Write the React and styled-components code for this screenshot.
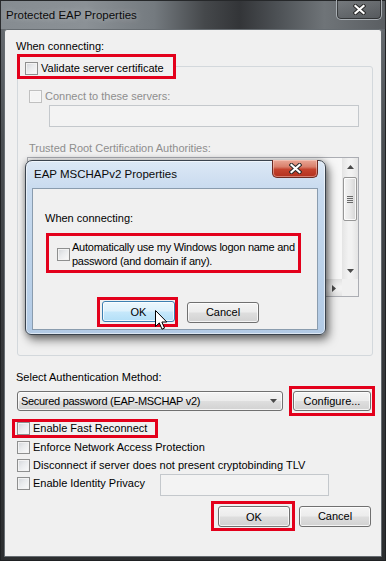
import React from "react";
import styled, { createGlobalStyle } from "styled-components";

const FONT = `"Liberation Sans", Arial, "DejaVu Sans", sans-serif`;
const RED = "#e3001b";

const GlobalStyle = createGlobalStyle`
  *, *::before, *::after { box-sizing: border-box; }
  html, body { margin: 0; padding: 0; }
  body { background: #2a2c2e; font-family: ${FONT}; overflow: hidden; }
`;

const Window = styled.div`
  position: relative;
  width: 386px;
  height: 561px;
  display: flex;
  flex-direction: column;
  background: linear-gradient(180deg, #6c7176 0%, #4b4f53 25%, #37393c 60%, #2c2e30 100%);
  box-shadow: inset 0 0 0 1px #1f2123;
`;

const TitleBar = styled.div`
  height: 29px;
  flex: none;
  display: flex;
  align-items: flex-start;
  padding-left: 6px;
  background: linear-gradient(90deg, #868c91 0%, #8b9196 22%, #747a7f 40%, #45484b 53%, #333538 62%, #4d5155 72%, #6f7478 84%, #5a5e62 100%);
  box-shadow: inset 0 1px 0 #26282a, inset 1px 0 0 #2a2c2e, inset -1px 0 0 #2a2c2e;
`;

const Title = styled.div`
  margin-top: ${(p) => p.$top}px;
  font-size: 11.5px;
  line-height: 14px;
  color: #0b0b0b;
  white-space: nowrap;
  text-shadow: ${(p) => (p.$glow ? "0 0 6px rgba(255,255,255,0.45)" : "none")};
`;

const CloseButton = styled.div`
  margin-left: auto;
  margin-right: ${(p) => (p.$red ? 0 : 4)}px;
  margin-top: ${(p) => (p.$red ? -1 : 0)}px;
  width: 46px;
  height: ${(p) => (p.$red ? 18 : 20)}px;
  flex: none;
  display: flex;
  align-items: center;
  justify-content: center;
  border-radius: 0 0 5px 5px;
  border: 1px solid ${(p) => (p.$red ? "#6b2a22" : "#a9afb4")};
  border-top: none;
  background: ${(p) =>
    p.$red
      ? "linear-gradient(180deg, #e9a796 0%, #d9806c 40%, #c5432e 55%, #b2311e 100%)"
      : "linear-gradient(180deg, rgba(255,255,255,0.08), rgba(0,0,0,0.08))"};
  box-shadow: ${(p) =>
    p.$red ? "inset 0 0 0 1px rgba(255,220,210,0.45)" : "inset 0 0 0 1px rgba(0,0,0,0.45)"};
`;

const CloseGlyph = () => (
  <svg width="13" height="11" viewBox="0 0 13 11">
    <g strokeLinecap="square">
      <path d="M2.5 2 L10.5 9 M10.5 2 L2.5 9" stroke="#2a2a2a" strokeWidth="4.2" />
      <path d="M2.5 2 L10.5 9 M10.5 2 L2.5 9" stroke="#ffffff" strokeWidth="2.2" />
    </g>
  </svg>
);

const Client = styled.div`
  position: relative;
  flex: 1;
  margin: 0 4px 4px 4px;
  display: flex;
  flex-direction: column;
  background: #f0f0f0;
  border: 1px solid #676d72;
  border-radius: 3px 3px 0 0;
`;

const Label = styled.div`
  font-size: 11px;
  line-height: 14px;
  color: ${(p) => (p.$disabled ? "#8e8e8e" : "#000")};
  white-space: nowrap;
`;

const Check = styled.label`
  display: flex;
  align-items: center;
  gap: ${(p) => p.$gap ?? 3}px;
  font-size: 11px;
  line-height: ${(p) => p.$lh ?? 14}px;
  letter-spacing: ${(p) => p.$ls ?? 0}px;
  color: ${(p) => (p.$disabled ? "#8e8e8e" : "#000")};
  white-space: nowrap;
`;

const Box = styled.input.attrs({ type: "checkbox", tabIndex: -1 })`
  appearance: none;
  -webkit-appearance: none;
  margin: 0;
  width: 13px;
  height: 13px;
  flex: none;
  border: 1px solid ${(p) => (p.disabled ? "#c0c0c0" : "#8e8f8f")};
  background: ${(p) =>
    p.disabled
      ? "#f4f4f4"
      : "linear-gradient(135deg, #d2d5d9 0%, #e9ebed 45%, #fbfbfb 100%)"};
  box-shadow: inset 0 0 0 1px ${(p) => (p.disabled ? "#f7f7f7" : "#f3f3f3")};
`;

const Highlight = styled.div`
  display: flex;
  align-items: center;
  width: ${(p) => (p.$w ? `${p.$w}px` : "fit-content")};
  border: 3px solid ${RED};
  padding: ${(p) => p.$pad};
`;

const Field = styled.input`
  width: ${(p) => p.$w}px;
  height: 22px;
  margin: 0;
  padding: 0;
  border: 1px solid #c4c8cc;
  background: #f3f3f3;
  outline: none;
`;

const Button = styled.button`
  width: ${(p) => p.$w}px;
  height: ${(p) => p.$h ?? 21}px;
  flex: none;
  margin: 0;
  padding: 0;
  font-family: ${FONT};
  font-size: 11px;
  color: #000;
  border: 1px solid ${(p) => (p.$hot ? "#3c7fb1" : "#707070")};
  border-radius: 3px;
  background: ${(p) =>
    p.$hot
      ? "linear-gradient(180deg, #ecf7fd 0%, #ddf1fc 48%, #c6e8fb 52%, #b3dff7 100%)"
      : "linear-gradient(180deg, #f4f4f4 0%, #ececec 48%, #dedede 52%, #d2d2d2 100%)"};
  box-shadow: inset 0 0 0 1px rgba(255, 255, 255, 0.75);
`;

/* ---- outer dialog sections ---- */

const ConnectingLabel = styled(Label)`
  margin: 9px 0 0 11px;
`;

const Group = styled.fieldset`
  margin: 1px 8px 0 12px;
  padding: 0;
  min-width: 0;
  border: 1px solid #d3d8dc;
  border-radius: 3px;
`;

const GroupLegend = styled.legend`
  margin-left: -1px;
  padding: 0;
`;

const GroupBody = styled.div`
  display: flex;
  flex-direction: column;
  align-items: flex-start;
  padding: 0 0 58px 9px;
`;

const ServersCheck = styled(Check)`
  margin: 10px 0 0 2px;
`;

const ServersField = styled(Field)`
  margin: 2px 0 0 22px;
`;

const TrustedLabel = styled(Label)`
  margin: 14px 0 0 2px;
`;

const ListBox = styled.div`
  margin-top: 2px;
  width: 332px;
  height: 140px;
  border: 1px solid #abadb3;
  background: #f7f7f7;
  display: grid;
  grid-template-columns: 1fr 16px;
  grid-template-rows: 1fr 17px;
`;

const VScroll = styled.div`
  display: flex;
  flex-direction: column;
  background: linear-gradient(90deg, #e4e4e4, #f2f2f2 40%, #f2f2f2 60%, #e4e4e4);
`;

const HScroll = styled.div`
  display: flex;
  justify-content: flex-end;
  border-top: 1px solid #e2e2e2;
  background: linear-gradient(180deg, #e4e4e4, #f2f2f2 40%, #f2f2f2 60%, #e4e4e4);
`;

const Corner = styled.div`
  background: #f0f0f0;
`;

const ScrollArrow = styled.div`
  flex: none;
  width: ${(p) => (p.$w ? `${p.$w}px` : "auto")};
  height: ${(p) => p.$h ?? 17}px;
  display: flex;
  align-items: center;
  justify-content: center;
  margin-top: ${(p) => (p.$push ? "auto" : "0")};
`;

const Thumb = styled.div`
  margin: 2px 1px 0 1px;
  height: 44px;
  border: 1px solid #979797;
  border-radius: 2px;
  background: linear-gradient(90deg, #f4f4f4 0%, #e9e9e9 50%, #d5d5d5 100%);
  box-shadow: inset 0 0 0 1px rgba(255, 255, 255, 0.8);
  display: flex;
  flex-direction: column;
  align-items: center;
  justify-content: center;
  gap: 1px;
`;

const Grip = styled.span`
  width: 6px;
  height: 1px;
  background: #6a6a6a;
`;

const Tri = ({ dir }) => {
  const pts =
    dir === "up" ? "0,4 3.5,0 7,4" : dir === "down" ? "0,0 7,0 3.5,4" : "0,0 4,3.5 0,7";
  const w = dir === "right" ? 4 : 7;
  const h = dir === "right" ? 7 : 4;
  return (
    <svg width={w} height={h} viewBox={`0 0 ${w} ${h}`}>
      <polygon points={pts} fill="#4a4a4a" />
    </svg>
  );
};

const AuthLabel = styled(Label)`
  margin: 14px 0 0 11px;
`;

const AuthRow = styled.div`
  display: flex;
  align-items: center;
  margin: 2px 0 0 12px;
`;

const Select = styled.div`
  width: 266px;
  height: 20px;
  display: flex;
  align-items: center;
  justify-content: space-between;
  padding: 0 5px 0 3px;
  border: 1px solid #707070;
  border-radius: 3px;
  background: linear-gradient(180deg, #f4f4f4 0%, #ececec 48%, #dedede 52%, #d2d2d2 100%);
  box-shadow: inset 0 0 0 1px rgba(255, 255, 255, 0.75);
  font-size: 11px;
  line-height: 14px;
  letter-spacing: -0.3px;
  white-space: nowrap;
`;

const ConfigureHighlight = styled(Highlight)`
  margin-left: 6px;
`;

const FastHighlight = styled(Highlight)`
  margin: 3px 0 0 7px;
`;

const OptionRow = styled.div`
  height: 18px;
  display: flex;
  align-items: center;
  margin-left: 12px;
`;

const IdentityRow = styled.div`
  display: grid;
  grid-template-columns: 143px 169px;
  align-items: start;
  margin-left: 12px;
`;

const IdentityCheck = styled(Check)`
  margin-top: 2px;
`;

const FooterRow = styled.div`
  display: flex;
  justify-content: flex-end;
  align-items: center;
  margin-top: 5px;
  padding-right: 10px;
  gap: 4px;
`;

/* ---- overlay dialog ---- */

const Popup = styled.div`
  position: absolute;
  left: 20px;
  top: 130px;
  width: 301px;
  height: 175px;
  z-index: 2;
  display: flex;
  flex-direction: column;
  padding: 0 7px 4px 6px;
  border: 1px solid #3a434d;
  border-radius: 7px 7px 6px 6px;
  background: linear-gradient(180deg, #dce8f5 0%, #c9dbef 16%, #bdd3ea 55%, #b2cae5 100%);
  box-shadow: 3px 5px 10px rgba(0, 0, 0, 0.5), 0 0 6px rgba(0, 0, 0, 0.3),
    inset 0 0 0 1px rgba(255, 255, 255, 0.55);
`;

const PopupTitleBar = styled.div`
  height: 27px;
  flex: none;
  display: flex;
  align-items: flex-start;
  padding-left: 2px;
`;

const PopupClient = styled.div`
  flex: 1;
  display: flex;
  flex-direction: column;
  align-items: flex-start;
  padding: 22px 0 0 12px;
  border: 1px solid #8a9cae;
  background: #f0f0f0;
`;

const AutoHighlight = styled(Highlight)`
  margin: 8px 0 0 1px;
`;

const PopupButtons = styled.div`
  display: flex;
  align-items: center;
  gap: 9px;
  margin: 24px 0 0 52px;
`;

const Cursor = styled.svg`
  position: absolute;
  left: 150px;
  top: 280px;
  z-index: 3;
`;

export default function App() {
  return (
    <>
      <GlobalStyle />
      <Window>
        <TitleBar>
          <Title $top={8} $glow>Protected EAP Properties</Title>
          <CloseButton>
            <CloseGlyph />
          </CloseButton>
        </TitleBar>
        <Client>
          <ConnectingLabel>When connecting:</ConnectingLabel>
          <Group>
            <GroupLegend>
              <Highlight $pad="4px 9px 1px 5px">
                <Check>
                  <Box />
                  Validate server certificate
                </Check>
              </Highlight>
            </GroupLegend>
            <GroupBody>
              <ServersCheck $disabled>
                <Box disabled />
                Connect to these servers:
              </ServersCheck>
              <ServersField $w={310} disabled />
              <TrustedLabel $disabled>Trusted Root Certification Authorities:</TrustedLabel>
              <ListBox>
                <div />
                <VScroll>
                  <ScrollArrow>
                    <Tri dir="up" />
                  </ScrollArrow>
                  <Thumb>
                    <Grip />
                    <Grip />
                    <Grip />
                    <Grip />
                  </Thumb>
                  <ScrollArrow $push>
                    <Tri dir="down" />
                  </ScrollArrow>
                </VScroll>
                <HScroll>
                  <ScrollArrow $w={17} $h={16}>
                    <Tri dir="right" />
                  </ScrollArrow>
                </HScroll>
                <Corner />
              </ListBox>
            </GroupBody>
          </Group>

          <AuthLabel>Select Authentication Method:</AuthLabel>
          <AuthRow>
            <Select>
              <span>Secured password (EAP-MSCHAP v2)</span>
              <Tri dir="down" />
            </Select>
            <ConfigureHighlight $pad="2px 1px">
              <Button $w={78} $h={20}>
                Configure...
              </Button>
            </ConfigureHighlight>
          </AuthRow>

          <FastHighlight $pad="0 8px 0 2px">
            <Check $lh={13}>
              <Box />
              Enable Fast Reconnect
            </Check>
          </FastHighlight>
          <OptionRow>
            <Check>
              <Box />
              Enforce Network Access Protection
            </Check>
          </OptionRow>
          <OptionRow>
            <Check>
              <Box />
              Disconnect if server does not present cryptobinding TLV
            </Check>
          </OptionRow>
          <IdentityRow>
            <IdentityCheck>
              <Box />
              Enable Identity Privacy
            </IdentityCheck>
            <Field $w={169} disabled />
          </IdentityRow>

          <FooterRow>
            <Highlight $pad="2px 2px 1px 4px">
              <Button $w={72}>OK</Button>
            </Highlight>
            <Button $w={72}>Cancel</Button>
          </FooterRow>

          <Popup>
            <PopupTitleBar>
              <Title $top={6}>EAP MSCHAPv2 Properties</Title>
              <CloseButton $red>
                <CloseGlyph />
              </CloseButton>
            </PopupTitleBar>
            <PopupClient>
              <Label>When connecting:</Label>
              <AutoHighlight $w={255} $pad="4px 0 2px 8px">
                <Check $gap={2} $ls={-0.25}>
                  <Box />
                  <span>
                    Automatically use my Windows logon name and
                    <br />
                    password (and domain if any).
                  </span>
                </Check>
              </AutoHighlight>
              <PopupButtons>
                <Highlight $pad="1px 0 2px 2px">
                  <Button $w={73} $hot>
                    OK
                  </Button>
                </Highlight>
                <Button $w={72}>Cancel</Button>
              </PopupButtons>
            </PopupClient>
          </Popup>

          <Cursor width="13" height="21" viewBox="0 0 13 21">
            <path
              d="M0.5 0.5 L0.5 16.5 L4.3 12.9 L7 19.2 L9.5 18.1 L6.9 12 L11.8 12 Z"
              fill="#ffffff"
              stroke="#000000"
              strokeWidth="1"
              strokeLinejoin="miter"
            />
          </Cursor>
        </Client>
      </Window>
    </>
  );
}
